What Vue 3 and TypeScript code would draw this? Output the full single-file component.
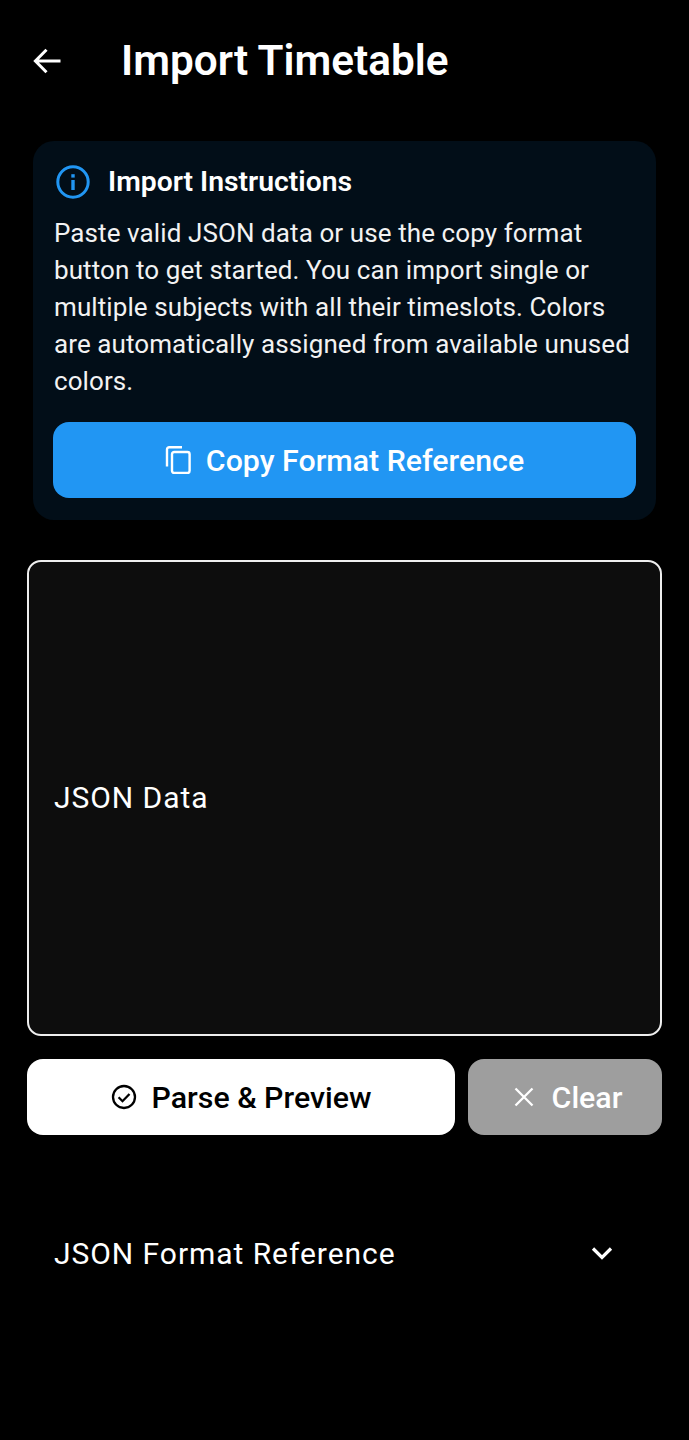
<script setup lang="ts">
const instructions =
  'Paste valid JSON data or use the copy format button to get started. You can import single or multiple subjects with all their timeslots. Colors are automatically assigned from available unused colors.'
</script>

<template>
  <div class="page">
    <header class="bar">
      <svg class="back" viewBox="0 0 28 26" fill="none" stroke="#fff" stroke-width="3">
        <path d="M27.5 13H2.5M13.5 1.8 2.4 13l11.1 11.2" />
      </svg>
      <h1>Import Timetable</h1>
    </header>

    <section class="card">
      <div class="card-head">
        <svg class="info" viewBox="0 0 34 34" fill="none">
          <circle cx="17" cy="17" r="15.2" stroke="#2196f3" stroke-width="3" />
          <rect x="15.3" y="15" width="3.4" height="10" fill="#2196f3" />
          <rect x="15.3" y="9.2" width="3.4" height="3.4" fill="#2196f3" />
        </svg>
        <h2>Import Instructions</h2>
      </div>
      <p>{{ instructions }}</p>
      <button class="btn copy">
        <svg class="copy-ico" viewBox="0 0 26 28" fill="none" stroke="#fff" stroke-width="2.4">
          <path d="M2 20.5V3.4A2.2 2.2 0 0 1 4.2 1.2H17" />
          <rect x="7" y="6" width="17.6" height="21" rx="2.2" />
        </svg>
        <span>Copy Format Reference</span>
      </button>
    </section>

    <div class="field"><span>JSON Data</span></div>

    <div class="actions">
      <button class="btn parse">
        <svg class="check" viewBox="0 0 26 26" fill="none" stroke="#000" stroke-width="2.3">
          <circle cx="13" cy="13" r="11" />
          <path d="M7.6 13.3l3.9 3.9 7-7.2" />
        </svg>
        <span>Parse &amp; Preview</span>
      </button>
      <button class="btn clear">
        <svg class="x" viewBox="0 0 26 26" fill="none" stroke="#fff" stroke-width="2.3">
          <path d="M4.5 4.5l17 17M21.500 4.500l-17 17" />
        </svg>
        <span>Clear</span>
      </button>
    </div>

    <div class="expander">
      <span>JSON Format Reference</span>
      <svg class="chev" viewBox="0 0 22 14" fill="none" stroke="#fff" stroke-width="3.2">
        <path d="M2 2.5l9 9 9-9" />
      </svg>
    </div>
  </div>
</template>

<style>
html,
body {
  margin: 0;
  background: #000;
}
</style>

<style scoped>
.page {
  width: 689px;
  height: 1440px;
  background: #000;
  color: #fff;
  font-family: Roboto, "Liberation Sans", sans-serif;
  box-sizing: border-box;
  overflow: hidden;
}
.bar {
  height: 121px;
  display: flex;
  align-items: center;
  padding-left: 33px;
  box-sizing: border-box;
}
.back {
  width: 28px;
  height: 26px;
  flex: none;
}
h1 {
  margin: 0 0 0 60px;
  font-size: 42.3px;
  font-weight: 600;
  line-height: 48px;
}
.card {
  margin: 20px 33px 0;
  height: 379px;
  box-sizing: border-box;
  background: #020e18;
  border-radius: 21px;
  padding: 23px 20px 22px;
  display: flex;
  flex-direction: column;
}
.card-head {
  display: flex;
  align-items: center;
  height: 36px;
}
.info {
  width: 34px;
  height: 34px;
  margin-left: 3px;
  flex: none;
}
h2 {
  margin: 0 0 0 18px;
  font-size: 28.3px;
  font-weight: 600;
  line-height: 36px;
}
p {
  margin: 15px 0 0;
  padding-left: 1px;
  font-size: 26px;
  line-height: 36.95px;
  letter-spacing: 0.09px;
  color: #f2f2f2;
}
.btn {
  border: 0;
  display: flex;
  align-items: center;
  justify-content: center;
  height: 76px;
  border-radius: 16px;
  font-family: inherit;
  font-size: 30.3px;
  font-weight: 500;
  padding: 0;
}
.copy {
  margin-top: auto;
  background: #2196f3;
  color: #fff;
  gap: 15px;
}
.copy-ico {
  width: 26px;
  height: 28px;
}
.field {
  margin: 40px 27px 0;
  height: 476px;
  box-sizing: border-box;
  background: #0d0d0d;
  border: 2px solid #eee;
  border-radius: 14px;
  display: flex;
  align-items: center;
  padding: 0 0 2px 25px;
  font-size: 30px;
  letter-spacing: 0.95px;
}
.actions {
  margin: 23px 27px 0;
  display: flex;
  gap: 13px;
}
.parse {
  width: 428px;
  background: #fff;
  color: #000;
  gap: 15px;
}
.check {
  width: 26px;
  height: 26px;
}
.clear {
  width: 194px;
  background: #9e9e9e;
  color: #fff;
  gap: 15px;
  padding-left: 3px;
}
.x {
  width: 26px;
  height: 26px;
}
.expander {
  margin: 80px 0 0 54px;
  height: 76px;
  display: flex;
  align-items: center;
  font-size: 30px;
  letter-spacing: 0.95px;
}
.chev {
  width: 22px;
  height: 14px;
  margin-left: auto;
  margin-right: 76px;
}
</style>
